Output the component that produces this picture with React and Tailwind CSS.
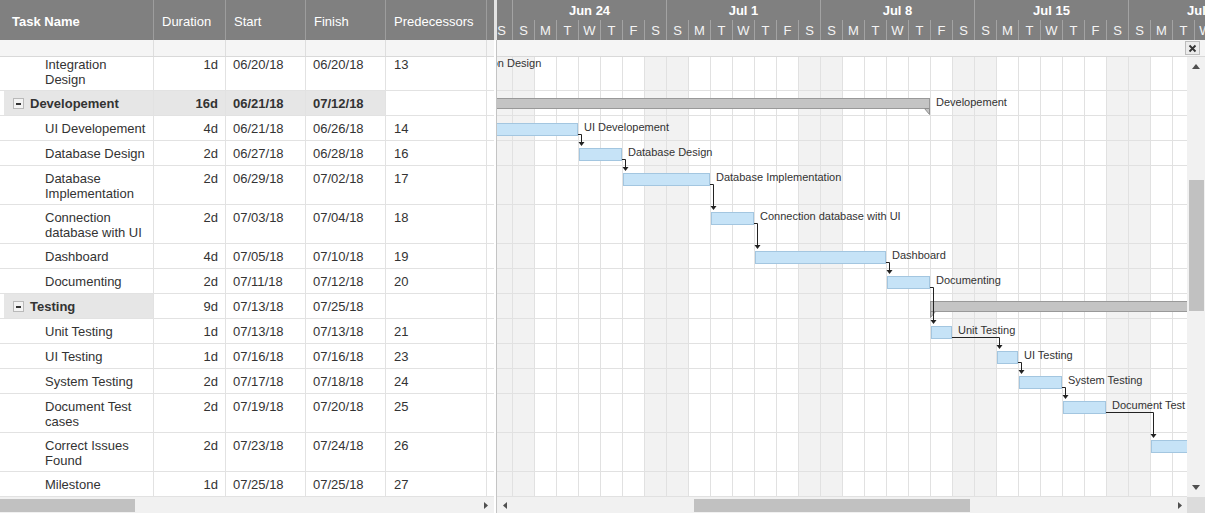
import React from 'react';

const ROWS = [
  { name: ['Integration', 'Design'], dur: '1d', start: '06/20/18', finish: '06/20/18', pred: '13', h: 39, s: -4, e: -3 },
  { name: ['Developement'], summary: true, selected: true, dur: '16d', start: '06/21/18', finish: '07/12/18', pred: '', h: 25, s: -3, e: 19 },
  { name: ['UI Developement'], dur: '4d', start: '06/21/18', finish: '06/26/18', pred: '14', h: 25, s: -3, e: 3 },
  { name: ['Database Design'], dur: '2d', start: '06/27/18', finish: '06/28/18', pred: '16', h: 25, s: 3, e: 5 },
  { name: ['Database', 'Implementation'], dur: '2d', start: '06/29/18', finish: '07/02/18', pred: '17', h: 39, s: 5, e: 9 },
  { name: ['Connection', 'database with UI'], dur: '2d', start: '07/03/18', finish: '07/04/18', pred: '18', h: 39, s: 9, e: 11 },
  { name: ['Dashboard'], dur: '4d', start: '07/05/18', finish: '07/10/18', pred: '19', h: 25, s: 11, e: 17 },
  { name: ['Documenting'], dur: '2d', start: '07/11/18', finish: '07/12/18', pred: '20', h: 25, s: 17, e: 19 },
  { name: ['Testing'], summary: true, dur: '9d', start: '07/13/18', finish: '07/25/18', pred: '', h: 25, s: 19, e: 32 },
  { name: ['Unit Testing'], dur: '1d', start: '07/13/18', finish: '07/13/18', pred: '21', h: 25, s: 19, e: 20 },
  { name: ['UI Testing'], dur: '1d', start: '07/16/18', finish: '07/16/18', pred: '23', h: 25, s: 22, e: 23 },
  { name: ['System Testing'], dur: '2d', start: '07/17/18', finish: '07/18/18', pred: '24', h: 25, s: 23, e: 25 },
  { name: ['Document Test', 'cases'], dur: '2d', start: '07/19/18', finish: '07/20/18', pred: '25', h: 39, s: 25, e: 27 },
  { name: ['Correct Issues', 'Found'], dur: '2d', start: '07/23/18', finish: '07/24/18', pred: '26', h: 39, s: 29, e: 31 },
  { name: ['Milestone'], dur: '1d', start: '07/25/18', finish: '07/25/18', pred: '27', h: 25, s: 31, e: 32 },
];

const LINKS = [[0, 2], [2, 3], [3, 4], [4, 5], [5, 6], [6, 7], [7, 9], [9, 10], [10, 11], [11, 12], [12, 13], [13, 14]];

const DAYS = ['S', 'M', 'T', 'W', 'T', 'F', 'S'];

function LeftHeader() {
  return (
    <div className="h-[40px] shrink-0 bg-[#808080] flex text-white text-[13px]">
      <div className="w-[154px] border-r border-[#9d9d9d] flex items-center pt-[3px] pl-[12px] font-bold">Task Name</div>
      <div className="w-[72px] border-r border-[#9d9d9d] flex items-center pt-[3px] pl-[8px]">Duration</div>
      <div className="w-[80px] border-r border-[#9d9d9d] flex items-center pt-[3px] pl-[8px]">Start</div>
      <div className="w-[80px] border-r border-[#9d9d9d] flex items-center pt-[3px] pl-[8px]">Finish</div>
      <div className="w-[101px] border-r border-[#9d9d9d] flex items-center pt-[3px] pl-[8px]">Predecessors</div>
      <div className="flex-1" />
    </div>
  );
}

function LeftFilter() {
  return (
    <div className="h-[17px] shrink-0 bg-[#f5f5f5] border-b border-[#d9d9d9] flex">
      <div className="w-[154px] border-r border-[#dedede]" />
      <div className="w-[72px] border-r border-[#dedede]" />
      <div className="w-[80px] border-r border-[#dedede]" />
      <div className="w-[80px] border-r border-[#dedede]" />
      <div className="w-[101px] border-r border-[#dedede]" />
      <div className="flex-1" />
    </div>
  );
}

function LeftRow({ r }) {
  const sel = r.selected;
  const cellBg = sel ? 'bg-[#e6e6e6] font-bold' : '';
  return (
    <div className="flex border-b border-[#e2e2e2] leading-[15px]" style={{ height: r.h }}>
      {r.summary ? (
        <div className="w-[154px] border-r border-[#e2e2e2] pl-[4px]">
          <div className="h-full bg-[#e6e6e6] flex items-start pt-[5px] pl-[9px] font-bold">
            <span className="mt-[2px] w-[11px] h-[11px] border border-[#b9b9b9] bg-[#f3f3f3] flex items-center justify-center shrink-0">
              <span className="w-[5px] h-[2px] bg-[#333]" />
            </span>
            <span className="ml-[6px] whitespace-nowrap">{r.name[0]}</span>
          </div>
        </div>
      ) : (
        <div className="w-[154px] border-r border-[#e2e2e2] pl-[45px] pt-[5px] whitespace-nowrap">
          {r.name.map((n, i) => (
            <div key={i}>{n}</div>
          ))}
        </div>
      )}
      <div className={`w-[72px] border-r border-[#e2e2e2] pr-[7px] pt-[5px] text-right ${cellBg}`}>{r.dur}</div>
      <div className={`w-[80px] border-r border-[#e2e2e2] pl-[7px] pt-[5px] ${cellBg}`}>{r.start}</div>
      <div className={`w-[80px] border-r border-[#e2e2e2] pl-[7px] pt-[5px] ${cellBg}`}>{r.finish}</div>
      <div className="w-[101px] border-r border-[#e2e2e2] pl-[8px] pt-[5px]">{r.pred}</div>
      <div className="flex-1" />
    </div>
  );
}

function RightHeader() {
  const months = ['Jun 24', 'Jul 1', 'Jul 8', 'Jul 15', 'Jul 22'];
  const days = [];
  for (let k = 0; k < 34; k++) days.push(DAYS[(6 + k) % 7]);
  return (
    <div className="h-[40px] shrink-0 bg-[#808080] overflow-hidden text-white text-[13px]">
      <div className="h-[20px] flex">
        <div className="w-[16px] shrink-0 border-r border-[#a3a3a3]" />
        {months.map((m, i) => (
          <div key={i} className="w-[154px] shrink-0 border-r border-[#a3a3a3] flex items-center justify-center pt-[1px] font-bold">
            {m}
          </div>
        ))}
      </div>
      <div className="h-[20px] flex ml-[-6px]">
        {days.map((d, i) => (
          <div key={i} className="w-[22px] shrink-0 border-r border-[#a3a3a3] flex items-center justify-center pt-[1px] text-[#f4f4f4]">
            {d}
          </div>
        ))}
      </div>
    </div>
  );
}

function RightFilter() {
  return (
    <div className="h-[17px] shrink-0 bg-[#f5f5f5] border-b border-[#d9d9d9] flex items-start justify-end pr-[5px] pt-[1px]">
      <div className="w-[15px] h-[14px] border border-[#bcbcbc] bg-[#ebebeb] flex items-center justify-center">
        <svg width="9" height="9" viewBox="0 0 9 9">
          <path d="M1.5 1.5 L7.5 7.5 M7.5 1.5 L1.5 7.5" stroke="#333" strokeWidth="1.8" />
        </svg>
      </div>
    </div>
  );
}

function Gantt() {
  const X = (d) => 15 + 22 * d;
  let acc = -5;
  const tops = ROWS.map((r) => {
    const t = acc;
    acc += r.h;
    return t;
  });
  const weekend = [];
  const vlines = [];
  for (let d = -1; d <= 32; d++) {
    const dow = ((d % 7) + 7) % 7;
    if (dow === 0 || dow === 6) weekend.push(d);
    vlines.push(X(d));
  }
  return (
    <svg width="690" height="440" className="block shrink-0" fontFamily="'Liberation Sans', Arial, sans-serif">
      <rect x="0" y="0" width="690" height="440" fill="#ffffff" />
      {weekend.map((d) => (
        <rect key={'w' + d} x={X(d)} y="0" width="22" height="440" fill="#f2f2f2" />
      ))}
      {vlines.map((x) => (
        <line key={'v' + x} x1={x + 0.5} x2={x + 0.5} y1="0" y2="440" stroke="#e1e1e1" strokeWidth="1" />
      ))}
      {ROWS.map((r, i) => (
        <line key={'h' + i} x1="0" x2="690" y1={tops[i] + r.h - 0.5} y2={tops[i] + r.h - 0.5} stroke="#e1e1e1" strokeWidth="1" />
      ))}
      {ROWS.map((r, i) => {
        const top = tops[i] + 7;
        const S = X(r.s);
        const E = X(r.e);
        const label = r.name.join(' ');
        if (r.summary) {
          return (
            <g key={'b' + i}>
              <rect x={S + 0.5} y={top + 0.5} width={E - S - 1} height="10" fill="#c4c4c4" stroke="#999" />
              <polygon points={`${E - 5.5},${top + 10.5} ${E - 0.5},${top + 10.5} ${E - 0.5},${top + 16.5}`} fill="#c4c4c4" stroke="#8f8f8f" />
              <polygon points={`${S + 0.5},${top + 10.5} ${S + 5.5},${top + 10.5} ${S + 0.5},${top + 16.5}`} fill="#c4c4c4" stroke="#8f8f8f" />
              <text x={E + 6} y={top + 8} fontSize="11" fill="#333">{label}</text>
            </g>
          );
        }
        return (
          <g key={'b' + i}>
            <rect x={S + 1.5} y={top + 0.5} width={E - S - 2} height="12" fill="#c6e3f7" stroke="#a3c6e0" />
            <text x={E + 6} y={top + 8} fontSize="11" fill="#333">{label}</text>
          </g>
        );
      })}
      {LINKS.map(([a, b], i) => {
        const E = X(ROWS[a].e);
        const y1 = tops[a] + 7 + 11.5;
        const xv = X(ROWS[b].s) + 3.5;
        const tip = tops[b] + 5;
        return (
          <g key={'l' + i}>
            <path d={`M${E} ${y1} H${xv} V${tip - 4}`} stroke="#222" strokeWidth="1" fill="none" />
            <polygon points={`${xv - 3},${tip - 4} ${xv + 3},${tip - 4} ${xv},${tip}`} fill="#222" />
          </g>
        );
      })}
    </svg>
  );
}

function VScroll() {
  return (
    <div className="w-[18px] h-[440px] bg-[#f1f1f1] flex flex-col items-center">
      <svg width="8" height="5" className="mt-[7px]" viewBox="0 0 8 5">
        <polygon points="0,5 8,5 4,0" fill="#505050" />
      </svg>
      <div className="mt-[111px] w-[15px] h-[131px] bg-[#c1c1c1]" />
      <svg width="8" height="5" className="mt-auto mb-[7px]" viewBox="0 0 8 5">
        <polygon points="0,0 8,0 4,5" fill="#505050" />
      </svg>
    </div>
  );
}

export default function App() {
  return (
    <div className="w-[1205px] h-[513px] flex overflow-hidden bg-white text-[13px] text-[#333] font-['Liberation_Sans',Arial,sans-serif]">
      <div className="w-[494px] shrink-0 flex flex-col">
        <LeftHeader />
        <LeftFilter />
        <div className="h-[440px] overflow-hidden">
          <div className="mt-[-5px]">
            {ROWS.map((r, i) => (
              <LeftRow key={i} r={r} />
            ))}
          </div>
        </div>
        <div className="h-[16px] bg-[#f1f1f1] flex items-center">
          <div className="w-[135px] h-[13px] bg-[#c1c1c1]" />
          <svg width="4" height="7" viewBox="0 0 4 7" className="ml-auto mr-[6px]">
            <polygon points="0,0 4,3.5 0,7" fill="#505050" />
          </svg>
        </div>
      </div>
      <div className="w-[3px] shrink-0 flex flex-col">
        <div className="h-[40px] bg-[#e4e4e4]" />
        <div className="flex-1 bg-white border-r border-[#c4c4c4]" />
      </div>
      <div className="flex-1 min-w-0 flex flex-col">
        <RightHeader />
        <RightFilter />
        <div className="h-[440px] flex overflow-hidden">
          <Gantt />
          <VScroll />
        </div>
        <div className="h-[16px] flex">
          <div className="flex-1 bg-[#f1f1f1] flex items-center pl-[6px]">
            <svg width="4" height="7" viewBox="0 0 4 7">
              <polygon points="4,0 0,3.5 4,7" fill="#505050" />
            </svg>
            <div className="ml-[187px] w-[276px] h-[13px] bg-[#c1c1c1]" />
            <svg width="4" height="7" viewBox="0 0 4 7" className="ml-auto mr-[5px]">
              <polygon points="0,0 4,3.5 0,7" fill="#505050" />
            </svg>
          </div>
          <div className="w-[18px] bg-[#dcdcdc]" />
        </div>
      </div>
    </div>
  );
}
